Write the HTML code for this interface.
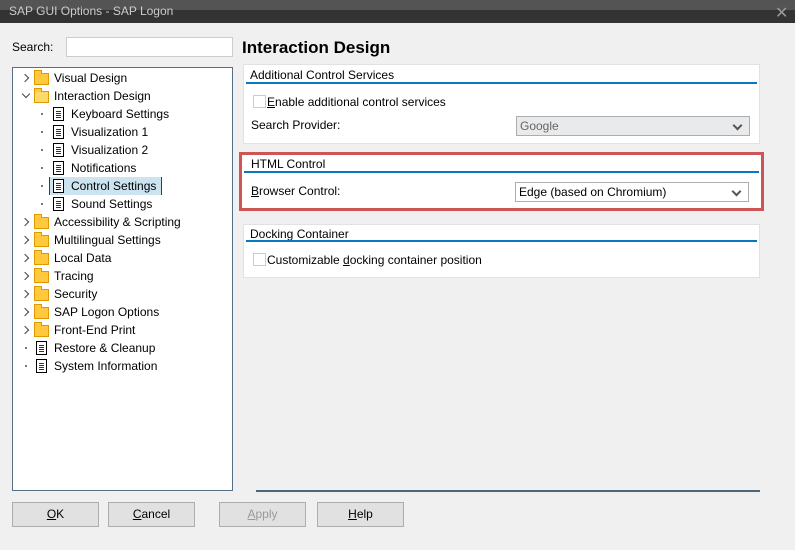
<!DOCTYPE html>
<html><head><style>
*{margin:0;padding:0;box-sizing:border-box}
body{width:795px;height:550px;background:#f0f0f0;font-family:"Liberation Sans","DejaVu Sans",sans-serif;font-size:12px;color:#000;position:relative;overflow:hidden}
.a{position:absolute;white-space:nowrap}
.tb1{left:0;top:0;width:795px;height:10px;background:#545454}
.tb2{left:0;top:10px;width:795px;height:13px;background:#333}
.tree{left:12px;top:67px;width:221px;height:424px;background:#fff;border:1px solid #56708a}
.row{position:absolute;height:18px;line-height:18px;white-space:nowrap}
.chev{position:absolute;width:6px;height:6px;border-right:1.6px solid #444;border-bottom:1.6px solid #444}
.fold{position:absolute;width:15px;height:12px;background:#ffc83d;border:1px solid #e09a00}
.fold:before{content:"";position:absolute;left:-1px;top:-4px;width:6px;height:3px;background:#ffc83d;border:1px solid #e09a00;border-bottom:none}
.doc{position:absolute;width:11px;height:14px;border:1px solid #000;background:#fff}
.doc:after{content:"";position:absolute;left:2px;top:3px;width:5px;height:7px;background:repeating-linear-gradient(#1a2a9a 0 1px,transparent 1px 2px)}
.dot{position:absolute;width:2px;height:2px;background:#777}
.grp{position:absolute;background:#fff;border:1px solid #e2e2e2}
.gh{position:absolute;left:2px;right:2px;top:17px;height:2px;background:#0a78be}
.sel{position:absolute;width:234px;height:20px;border:1px solid #adadad;background:#fff;line-height:18px;padding-left:3px}
.sel:after{content:"";position:absolute;right:8px;top:5px;width:5px;height:5px;border-right:2px solid #555;border-bottom:2px solid #555;transform:rotate(45deg)}
.cb{position:absolute;width:13px;height:13px;border:1px solid #ccc;background:#fff}
.btn{position:absolute;top:502px;width:87px;height:25px;background:#e1e1e1;border:1px solid #adadad;text-align:center;line-height:23px}
u{text-decoration:underline}
</style></head><body>
<div class="a tb1"></div><div class="a tb2"></div>
<div class="a" style="left:9px;top:4px;color:#ccc;font-size:12px">SAP GUI Options - SAP Logon</div>
<div class="a" style="left:775px;top:3px;color:#999;font-size:16px">✕</div>
<div class="a" style="left:12px;top:40px">Search:</div>
<div class="a" style="left:66px;top:37px;width:167px;height:20px;background:#fff;border:1px solid #ccc"></div>
<div class="a tree">
<div class="row" style="top:1px;left:0;width:215px">
 <div class="chev" style="left:9px;top:6px;transform:rotate(-45deg)"></div><div class="fold" style="left:21px;top:4px"></div><span style="position:absolute;left:41px">Visual Design</span></div>
<div class="row" style="top:19px;left:0;width:215px">
 <div class="chev" style="left:10px;top:4px;transform:rotate(45deg)"></div><div class="fold" style="left:21px;top:4px;background:#ffd86a"></div><span style="position:absolute;left:41px">Interaction Design</span></div>
<div class="row" style="top:37px;left:0"><div class="dot" style="left:28px;top:8px"></div><div class="doc" style="left:40px;top:2px"></div><span style="position:absolute;left:58px">Keyboard Settings</span></div>
<div class="row" style="top:55px;left:0"><div class="dot" style="left:28px;top:8px"></div><div class="doc" style="left:40px;top:2px"></div><span style="position:absolute;left:58px">Visualization 1</span></div>
<div class="row" style="top:73px;left:0"><div class="dot" style="left:28px;top:8px"></div><div class="doc" style="left:40px;top:2px"></div><span style="position:absolute;left:58px">Visualization 2</span></div>
<div class="row" style="top:91px;left:0"><div class="dot" style="left:28px;top:8px"></div><div class="doc" style="left:40px;top:2px"></div><span style="position:absolute;left:58px">Notifications</span></div>
<div class="row" style="top:109px;left:0"><div class="dot" style="left:28px;top:8px"></div>
 <div style="position:absolute;left:36px;top:0;width:113px;height:18px;background:#cce4f0;border-left:1px solid #c00;border-right:1px solid #c00"></div>
 <div class="doc" style="left:40px;top:2px"></div><span style="position:absolute;left:58px">Control Settings</span></div>
<div class="row" style="top:127px;left:0"><div class="dot" style="left:28px;top:8px"></div><div class="doc" style="left:40px;top:2px"></div><span style="position:absolute;left:58px">Sound Settings</span></div>
<div class="row" style="top:145px;left:0"><div class="chev" style="left:9px;top:6px;transform:rotate(-45deg)"></div><div class="fold" style="left:21px;top:4px"></div><span style="position:absolute;left:41px">Accessibility &amp; Scripting</span></div>
<div class="row" style="top:163px;left:0"><div class="chev" style="left:9px;top:6px;transform:rotate(-45deg)"></div><div class="fold" style="left:21px;top:4px"></div><span style="position:absolute;left:41px">Multilingual Settings</span></div>
<div class="row" style="top:181px;left:0"><div class="chev" style="left:9px;top:6px;transform:rotate(-45deg)"></div><div class="fold" style="left:21px;top:4px"></div><span style="position:absolute;left:41px">Local Data</span></div>
<div class="row" style="top:199px;left:0"><div class="chev" style="left:9px;top:6px;transform:rotate(-45deg)"></div><div class="fold" style="left:21px;top:4px"></div><span style="position:absolute;left:41px">Tracing</span></div>
<div class="row" style="top:217px;left:0"><div class="chev" style="left:9px;top:6px;transform:rotate(-45deg)"></div><div class="fold" style="left:21px;top:4px"></div><span style="position:absolute;left:41px">Security</span></div>
<div class="row" style="top:235px;left:0"><div class="chev" style="left:9px;top:6px;transform:rotate(-45deg)"></div><div class="fold" style="left:21px;top:4px"></div><span style="position:absolute;left:41px">SAP Logon Options</span></div>
<div class="row" style="top:253px;left:0"><div class="chev" style="left:9px;top:6px;transform:rotate(-45deg)"></div><div class="fold" style="left:21px;top:4px"></div><span style="position:absolute;left:41px">Front-End Print</span></div>
<div class="row" style="top:271px;left:0"><div class="dot" style="left:12px;top:8px"></div><div class="doc" style="left:23px;top:2px"></div><span style="position:absolute;left:41px">Restore &amp; Cleanup</span></div>
<div class="row" style="top:289px;left:0"><div class="dot" style="left:12px;top:8px"></div><div class="doc" style="left:23px;top:2px"></div><span style="position:absolute;left:41px">System Information</span></div>
</div>

<div class="a" style="left:242px;top:38px;font-size:17px;font-weight:bold">Interaction Design</div>

<div class="grp" style="left:243px;top:64px;width:517px;height:80px">
 <div class="a" style="left:6px;top:3px">Additional Control Services</div><div class="gh"></div>
 <div class="cb" style="left:9px;top:30px"></div><div class="a" style="left:23px;top:30px"><u>E</u>nable additional control services</div>
 <div class="a" style="left:7px;top:53px">Search Provider:</div>
 <div class="sel" style="left:272px;top:51px;background:#e8eaec;color:#666">Google</div>
</div>
<div class="a" style="left:239px;top:152px;width:525px;height:59px;border:3px solid #cc5555;background:#fff">
 <div class="a" style="left:9px;top:2px">HTML Control</div><div class="gh" style="left:2px;right:2px;top:16px"></div>
 <div class="a" style="left:9px;top:29px"><u>B</u>rowser Control:</div>
 <div class="sel" style="left:273px;top:27px">Edge (based on Chromium)</div>
</div>
<div class="grp" style="left:243px;top:224px;width:517px;height:54px">
 <div class="a" style="left:6px;top:2px">Docking Container</div><div class="gh" style="top:15px"></div>
 <div class="cb" style="left:9px;top:28px"></div><div class="a" style="left:23px;top:28px">Customizable <u>d</u>ocking container position</div>
</div>

<div class="a" style="left:256px;top:490px;width:504px;height:2px;background:#4e6676"></div>
<div class="btn" style="left:12px"><u>O</u>K</div>
<div class="btn" style="left:108px"><u>C</u>ancel</div>
<div class="btn" style="left:219px;color:#999"><u>A</u>pply</div>
<div class="btn" style="left:317px"><u>H</u>elp</div>
</body></html>
